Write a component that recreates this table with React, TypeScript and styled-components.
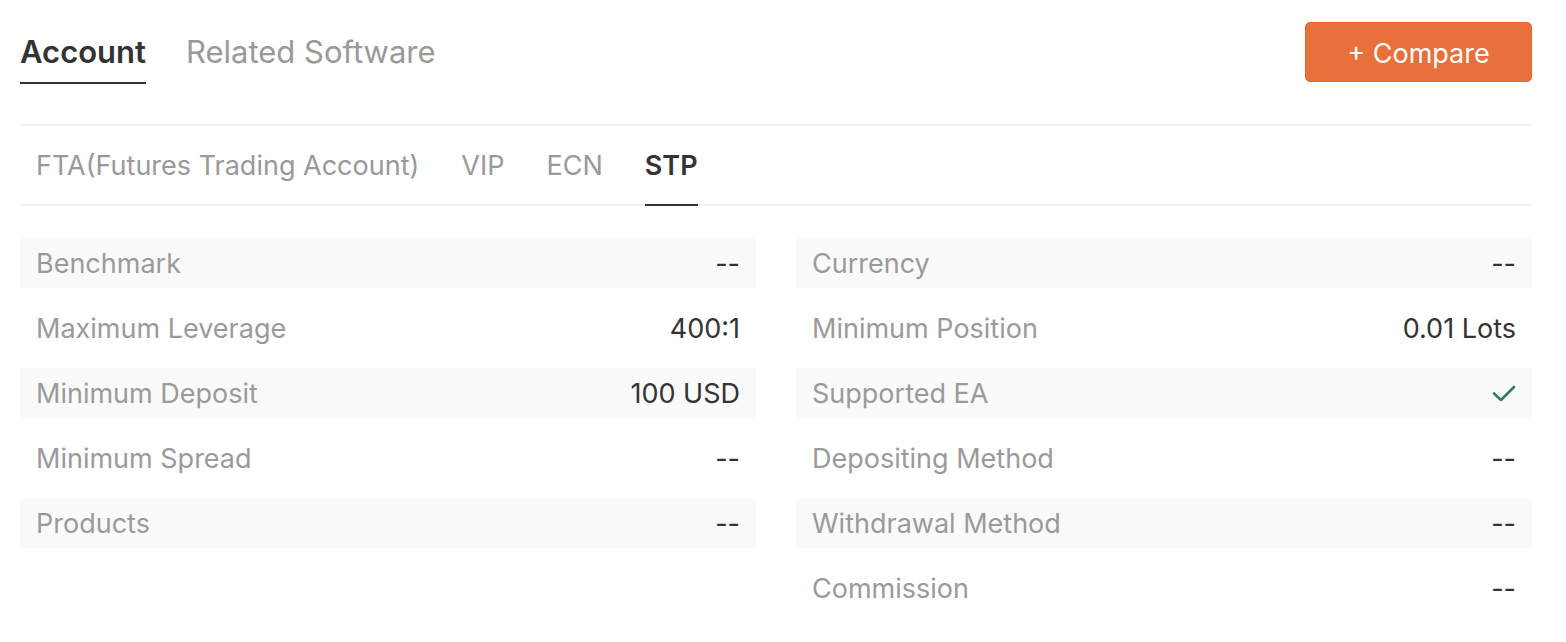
import React, { useState } from 'react';
import styled, { createGlobalStyle } from 'styled-components';

const GlobalStyle = createGlobalStyle`
  body {
    margin: 0;
    background: #ffffff;
    font-family: Inter, "Noto Sans", sans-serif;
  }
`;

const Page = styled.div`
  width: 1512px;
  padding: 0 0 0 20px;
`;

const TopBar = styled.div`
  display: flex;
  justify-content: space-between;
  align-items: flex-start;
  height: 126px;
  border-bottom: 2px solid #f0f0f0;
  box-sizing: border-box;
`;

const MainTabs = styled.div`
  display: flex;
  gap: 40px;
  padding-top: 30px;
`;

const MainTab = styled.div<{ $active?: boolean }>`
  font-size: 31px;
  line-height: 44px;
  padding-bottom: 8px;
  font-weight: ${(p) => (p.$active ? 600 : 400)};
  color: ${(p) => (p.$active ? '#333333' : '#999999')};
  border-bottom: 2px solid ${(p) => (p.$active ? '#333333' : 'transparent')};
  cursor: pointer;
`;

const CompareButton = styled.button`
  margin-top: 22px;
  width: 227px;
  height: 60px;
  padding-top: 3px;
  background: #e8703a;
  border: 1px solid #e2682f;
  border-radius: 5px;
  color: #ffffff;
  font-family: Inter, "Noto Sans", sans-serif;
  font-size: 27px;
  cursor: pointer;
`;

const SubTabs = styled.div`
  display: flex;
  gap: 42px;
  padding-left: 16px;
  height: 80px;
  align-items: stretch;
  border-bottom: 2px solid #f0f0f0;
  box-sizing: border-box;
`;

const SubTab = styled.div<{ $active?: boolean }>`
  display: flex;
  align-items: center;
  font-size: 27px;
  font-weight: ${(p) => (p.$active ? 600 : 400)};
  color: ${(p) => (p.$active ? '#333333' : '#999999')};
  border-bottom: 2px solid ${(p) => (p.$active ? '#333333' : 'transparent')};
  margin-bottom: -2px;
  cursor: pointer;
`;

const Columns = styled.div`
  display: grid;
  grid-template-columns: 1fr 1fr;
  column-gap: 40px;
  padding-top: 32px;
`;

const Column = styled.div`
  display: flex;
  flex-direction: column;
  gap: 15px;
`;

const Row = styled.div<{ $striped: boolean }>`
  display: flex;
  justify-content: space-between;
  align-items: center;
  height: 50px;
  padding: 0 16px;
  background: ${(p) => (p.$striped ? '#fafafa' : 'transparent')};
  font-size: 27px;
`;

const Label = styled.span`
  color: #9a9a9a;
`;

const Value = styled.span`
  color: #333333;
`;

const Check = () => (
  <svg width="24" height="18" viewBox="0 0 24 18" fill="none">
    <path d="M2 8.5 L9 15 L22 2" stroke="#2f7d5d" strokeWidth="2.6" strokeLinecap="round" strokeLinejoin="round" />
  </svg>
);

type Item = { label: string; value: React.ReactNode };

const left: Item[] = [
  { label: 'Benchmark', value: '--' },
  { label: 'Maximum Leverage', value: '400:1' },
  { label: 'Minimum Deposit', value: '100 USD' },
  { label: 'Minimum Spread', value: '--' },
  { label: 'Products', value: '--' },
];

const right: Item[] = [
  { label: 'Currency', value: '--' },
  { label: 'Minimum Position', value: '0.01 Lots' },
  { label: 'Supported EA', value: <Check /> },
  { label: 'Depositing Method', value: '--' },
  { label: 'Withdrawal Method', value: '--' },
  { label: 'Commission', value: '--' },
];

const accounts = ['FTA(Futures Trading Account)', 'VIP', 'ECN', 'STP'];

const InfoColumn: React.FC<{ items: Item[] }> = ({ items }) => (
  <Column>
    {items.map((it, i) => (
      <Row key={it.label} $striped={i % 2 === 0}>
        <Label>{it.label}</Label>
        <Value>{it.value}</Value>
      </Row>
    ))}
  </Column>
);

const App: React.FC = () => {
  const [tab, setTab] = useState('Account');
  const [account, setAccount] = useState('STP');

  return (
    <Page>
      <GlobalStyle />
      <TopBar>
        <MainTabs>
          {['Account', 'Related Software'].map((t) => (
            <MainTab key={t} $active={t === tab} onClick={() => setTab(t)}>
              {t}
            </MainTab>
          ))}
        </MainTabs>
        <CompareButton>+ Compare</CompareButton>
      </TopBar>
      <SubTabs>
        {accounts.map((a) => (
          <SubTab key={a} $active={a === account} onClick={() => setAccount(a)}>
            {a}
          </SubTab>
        ))}
      </SubTabs>
      <Columns>
        <InfoColumn items={left} />
        <InfoColumn items={right} />
      </Columns>
    </Page>
  );
};

export default App;
